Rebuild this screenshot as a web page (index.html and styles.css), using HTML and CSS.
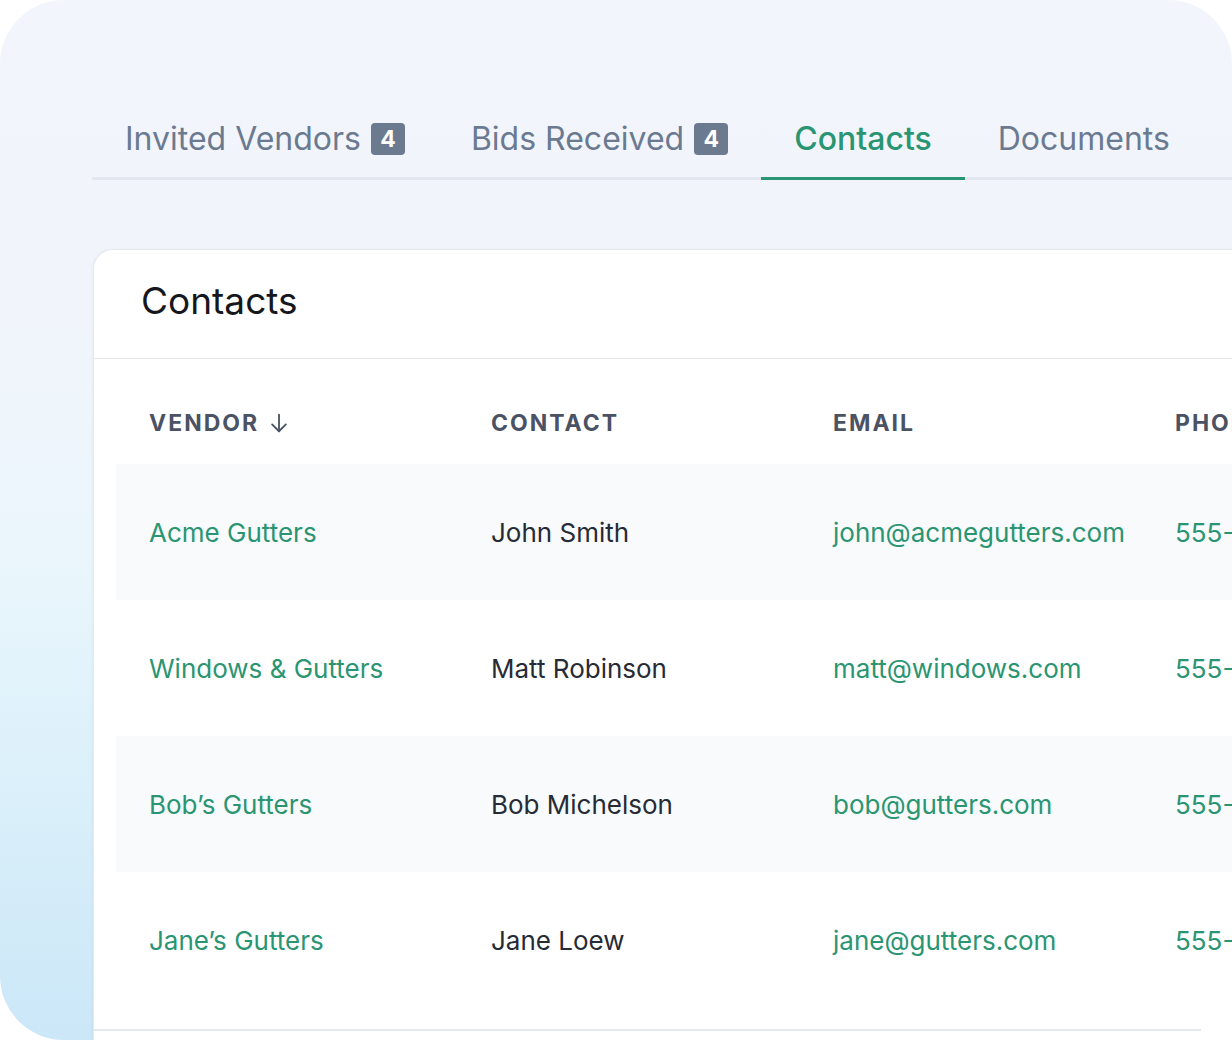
FILE: index.html
```html
<!DOCTYPE html>
<html lang="en">
<head>
<meta charset="utf-8">
<title>Contacts</title>
<link rel="stylesheet" href="styles.css">
</head>
<body>
<div class="frame">
  <nav class="tabs">
    <a class="tab">Invited Vendors <span class="badge">4</span></a>
    <a class="tab">Bids Received <span class="badge">4</span></a>
    <a class="tab active">Contacts</a>
    <a class="tab">Documents</a>
  </nav>
  <section class="card">
    <header class="card-head"><h2>Contacts</h2></header>
    <table class="contacts">
      <colgroup><col><col><col><col></colgroup>
      <thead>
        <tr>
          <th><span class="th-sort">Vendor
            <svg class="sort-icon" viewBox="0 0 24 24" width="22" height="22" fill="none" stroke="currentColor" stroke-width="2" stroke-linecap="round" stroke-linejoin="round"><path d="M12 3v18"/><path d="M4.5 13.5L12 21l7.5-7.5"/></svg></span></th>
          <th>Contact</th>
          <th>Email</th>
          <th>Phone</th>
        </tr>
      </thead>
      <tbody>
        <tr><td class="link">Acme Gutters</td><td>John Smith</td><td class="link">john@acmegutters.com</td><td class="link">555-123-4567</td></tr>
        <tr><td class="link">Windows &amp; Gutters</td><td>Matt Robinson</td><td class="link">matt@windows.com</td><td class="link">555-234-5678</td></tr>
        <tr><td class="link">Bob’s Gutters</td><td>Bob Michelson</td><td class="link">bob@gutters.com</td><td class="link">555-345-6789</td></tr>
        <tr><td class="link">Jane’s Gutters</td><td>Jane Loew</td><td class="link">jane@gutters.com</td><td class="link">555-456-7890</td></tr>
      </tbody>
    </table>
    <div class="card-foot"></div>
  </section>
</div>
</body>
</html>
```

FILE: styles.css
```css
* { box-sizing: border-box; }
html, body { margin: 0; padding: 0; background: #ffffff; }
body { font-family: Inter, "Noto Sans", "Liberation Sans", sans-serif; }

.frame {
  width: 1232px;
  height: 1040px;
  overflow: hidden;
  border-radius: 64px 64px 0 64px;
  background: linear-gradient(to bottom, #f2f5fc 0%, #f1f5fb 30%, #eaf6fc 54%, #dbf0fa 75%, #cbe7f8 100%);
  padding-top: 119px;
}

.tabs {
  display: flex;
  margin-left: 92px;
  border-bottom: 3px solid #e3e7ef;
}
.tab {
  display: flex;
  align-items: center;
  gap: 10px;
  padding: 0 33px 18px;
  height: 61px;
  margin-bottom: -3px;
  border-bottom: 3px solid transparent;
  font-size: 32px;
  line-height: 40px;
  color: #6b7a90;
  white-space: nowrap;
}
.tab.active {
  color: #2a9572;
  font-weight: 500;
  border-bottom-color: #2a9572;
}
.badge {
  display: inline-flex;
  align-items: center;
  justify-content: center;
  width: 34px;
  height: 32px;
  border-radius: 4px;
  background: #6b7a8f;
  color: #ffffff;
  font-size: 23px;
  font-weight: 700;
  line-height: 1;
}

.card {
  margin: 69px 0 0 93px;
  width: 1400px;
  background: #ffffff;
  border: 1px solid #e5e8ee;
  border-right: 0;
  border-bottom: 0;
  border-radius: 20px 0 0 0;
  box-shadow: 0 1px 4px rgba(30, 41, 59, 0.06);
  min-height: 900px;
}
.card-head {
  height: 109px;
  border-bottom: 1px solid #e5e8ee;
  display: flex;
  align-items: center;
  padding-left: 47px;
}
.card-head h2 {
  margin: 0;
  font-size: 37px;
  font-weight: 400;
  color: #15171c;
  line-height: 44px;
  padding-bottom: 6px;
}

.contacts {
  margin: 23px 0 0 22px;
  border-collapse: collapse;
  table-layout: fixed;
  width: 1368px;
}
.contacts col { width: 342px; }
.contacts th {
  height: 82px;
  padding: 0 0 0 33px;
  text-align: left;
  vertical-align: middle;
  font-size: 23px;
  font-weight: 700;
  letter-spacing: 2px;
  text-transform: uppercase;
  color: #4b5263;
  white-space: nowrap;
}
.th-sort {
  display: inline-flex;
  align-items: center;
  gap: 9px;
}
.sort-icon { color: #4b5263; }
.contacts td {
  height: 136px;
  padding: 0 0 0 33px;
  vertical-align: middle;
  font-size: 26px;
  color: #262b36;
  white-space: nowrap;
}
.contacts td.link { color: #2a9572; }
.contacts tbody tr:nth-child(odd) td { background: #f8fafc; }

.card-foot {
  margin-top: 21px;
  width: 1107px;
  height: 2px;
  background: #e5e8ee;
}
```
